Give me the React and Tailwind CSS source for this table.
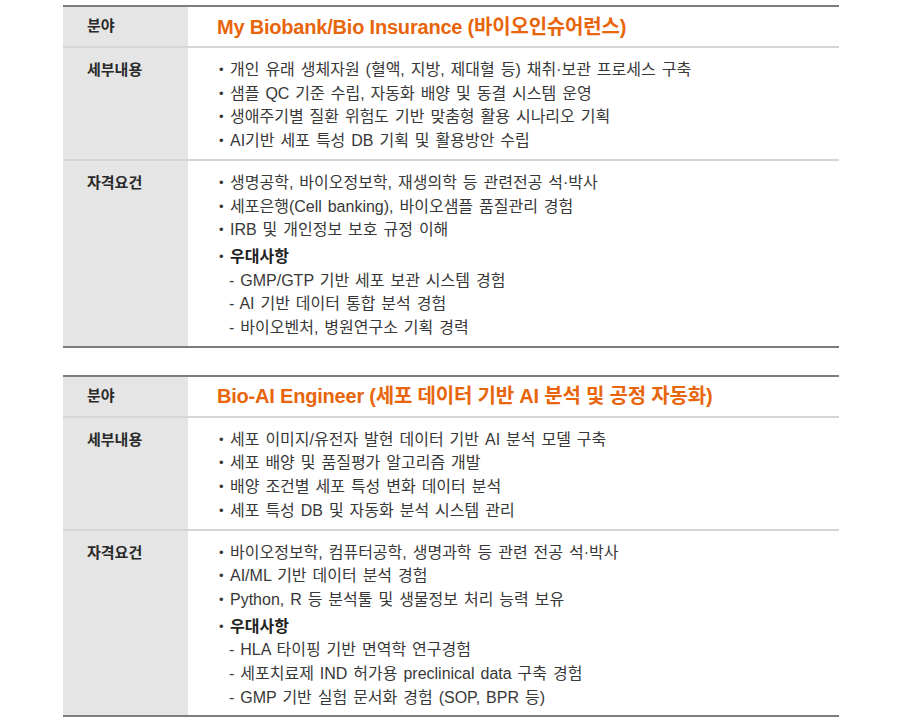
const jobs = [
    {
        title: 'My Biobank/Bio Insurance (바이오인슈어런스)',
        details: [
            '개인 유래 생체자원 (혈액, 지방, 제대혈 등) 채취·보관 프로세스 구축',
            '샘플 QC 기준 수립, 자동화 배양 및 동결 시스템 운영',
            '생애주기별 질환 위험도 기반 맞춤형 활용 시나리오 기획',
            'AI기반 세포 특성 DB 기획 및 활용방안 수립',
        ],
        reqs: [
            '생명공학, 바이오정보학, 재생의학 등 관련전공 석·박사',
            '세포은행(Cell banking), 바이오샘플 품질관리 경험',
            'IRB 및 개인정보 보호 규정 이해',
        ],
        plus: [
            'GMP/GTP 기반 세포 보관 시스템 경험',
            'AI 기반 데이터 통합 분석 경험',
            '바이오벤처, 병원연구소 기획 경력',
        ],
    },
    {
        title: 'Bio-AI Engineer (세포 데이터 기반 AI 분석 및 공정 자동화)',
        details: [
            '세포 이미지/유전자 발현 데이터 기반 AI 분석 모델 구축',
            '세포 배양 및 품질평가 알고리즘 개발',
            '배양 조건별 세포 특성 변화 데이터 분석',
            '세포 특성 DB 및 자동화 분석 시스템 관리',
        ],
        reqs: [
            '바이오정보학, 컴퓨터공학, 생명과학 등 관련 전공 석·박사',
            'AI/ML 기반 데이터 분석 경험',
            'Python, R 등 분석툴 및 생물정보 처리 능력 보유',
        ],
        plus: [
            'HLA 타이핑 기반 면역학 연구경험',
            '세포치료제 IND 허가용 preclinical data 구축 경험',
            'GMP 기반 실험 문서화 경험 (SOP, BPR 등)',
        ],
    },
]

function Bullet({ children, bold }) {
    return (
        <div className="flex">
            <span className="w-[11px] shrink-0 text-[13px]">•</span>
            <span className={bold ? 'font-bold text-[#222]' : ''}>{children}</span>
        </div>
    )
}

function Row({ label, children, last }) {
    return (
        <div className={`flex ${last ? '' : 'border-b-2 border-[#d5d5d5]'}`}>
            <div className="w-[125px] shrink-0 bg-[#e5e5e5] pl-6 pt-[10px] text-[15px] font-bold text-[#2a2a2a] leading-[23.7px]">{label}</div>
            <div className="flex-1 pl-[31px] pt-[10px] pb-[6px] text-[16px] text-[#383838] leading-[23.7px] [word-spacing:1.5px]">{children}</div>
        </div>
    )
}

function JobTable({ job }) {
    return (
        <div className="border-t-2 border-b-2 border-[#7d7d7d]">
            <div className="flex h-[41px] border-b-2 border-[#d5d5d5]">
                <div className="w-[125px] shrink-0 bg-[#e5e5e5] pl-6 flex items-center text-[15px] font-bold text-[#2a2a2a]">분야</div>
                <div className="flex-1 pl-[29px] flex items-center text-[20px] font-bold text-[#e8650c] tracking-[-0.2px]">{job.title}</div>
            </div>
            <Row label="세부내용">
                {job.details.map(d => <Bullet key={d}>{d}</Bullet>)}
            </Row>
            <Row label="자격요건" last>
                {job.reqs.map(r => <Bullet key={r}>{r}</Bullet>)}
                <div className="mt-[3px]">
                    <Bullet bold>우대사항</Bullet>
                </div>
                <div className="pl-[10px]">
                    {job.plus.map(p => <div key={p}>- {p}</div>)}
                </div>
            </Row>
        </div>
    )
}

export default function App() {
    return (
        <div className="w-[900px] h-[726px] bg-white pt-[5px] pl-[63px] pr-[61px]" style={{ fontFamily: '"Liberation Sans", "Noto Sans CJK KR", sans-serif' }}>
            <div className="space-y-[27px]">
                {jobs.map(j => <JobTable key={j.title} job={j} />)}
            </div>
        </div>
    )
}
